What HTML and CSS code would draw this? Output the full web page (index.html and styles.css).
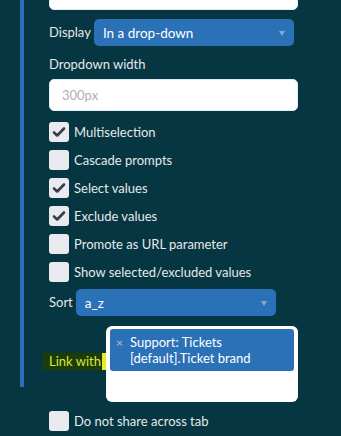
FILE: index.html
```html
<!DOCTYPE html>
<html lang="en">
<head>
  <meta charset="UTF-8" />
  <title>Prompt settings</title>
  <link rel="stylesheet" href="styles.css">
</head>
<body>
  <div class="panel">
    <!-- Cut off input above -->
    <div class="input input-top"></div>
    <!-- Display -->
    <div class="row display-row">
      <span class="label">Display</span>
      <div class="select select-display">
        <span>In a drop-down</span>
        <i class="caret"></i>
      </div>
    </div>
    <div class="field-label">Dropdown width</div>
    <div class="input"><span class="placeholder">300px</span></div>
    <!-- Options -->
    <div class="checks">
      <label class="check"><span class="box on"><svg viewBox="0 0 20 20"><path d="M5 10.5l3.2 3L15 6.5" /></svg></span>Multiselection</label>
      <label class="check"><span class="box"></span>Cascade prompts</label>
      <label class="check"><span class="box on"><svg viewBox="0 0 20 20"><path d="M5 10.5l3.2 3L15 6.5" /></svg></span>Select values</label>
      <label class="check"><span class="box on"><svg viewBox="0 0 20 20"><path d="M5 10.5l3.2 3L15 6.5" /></svg></span>Exclude values</label>
      <label class="check"><span class="box"></span>Promote as URL parameter</label>
      <label class="check"><span class="box"></span>Show selected/excluded values</label>
    </div>
    <!-- Sort -->
    <div class="row sort-row">
      <span class="label">Sort</span>
      <div class="select select-sort">
        <span>a_z</span>
        <i class="caret"></i>
      </div>
    </div>
    <!-- Link with -->
    <div class="row link-row">
      <span class="link-label">Link with</span>
      <div class="link-box">
        <div class="tag">
          <span class="tag-x">×</span>
          <span class="tag-text">Support: Tickets<br>[default].Ticket brand</span>
        </div>
      </div>
    </div>
  </div>
  <label class="check bottom-check"><span class="box"></span>Do not share across tab</label>
</body>
</html>
```

FILE: styles.css
```css
/* Reset */
* { margin: 0; padding: 0; box-sizing: border-box; }
html, body { height: 100%; }
body {
  background: #053641;
  color: #e6e9ea;
  font-family: Lato, "Open Sans", sans-serif;
  font-size: 13px;
  overflow: hidden;
}
/* Panel with blue rule */
.panel {
  margin-left: 20px;
  width: 278px;
  padding-left: 25px;
  border-left: 4px solid #2a6fb3;
}
.row {
  display: flex;
  align-items: center;
}
.label { margin-right: 3px; margin-top: -2px; }
/* Inputs */
.input {
  height: 32px;
  width: 249px;
  background: #fff;
  border: 1px solid #d9eef5;
  border-radius: 5px;
  margin-top: 6px;
  padding: 0 12px;
  display: flex;
  align-items: center;
}
.input-top { margin-top: -22px; }
.placeholder { color: #b0b0b0; font-size: 13px; }
.field-label { margin-top: 9px; line-height: 18px; }
/* Selects */
.select {
  height: 27px;
  background: #2a71b7;
  border-radius: 5px;
  color: #fff;
  font-size: 13.5px;
  display: flex;
  align-items: center;
  justify-content: space-between;
  padding: 0 9px 0 9px;
}
.select-display { width: 200px; }
.display-row { margin-top: 9px; }
.select-sort { width: 200px; }
.sort-row { margin-top: 3px; }
.caret {
  width: 0;
  height: 0;
  border-left: 3.5px solid transparent;
  border-right: 3.5px solid transparent;
  border-top: 5px solid #8ea7c2;
  margin-top: 1px;
}
/* Checkboxes */
.checks { margin-top: 7px; }
.check {
  display: flex;
  align-items: center;
  height: 28px;
}
.box {
  width: 20px;
  height: 20px;
  border-radius: 3px;
  background: #e8eaee;
  margin-right: 5px;
  display: flex;
}
.box svg { width: 20px; height: 20px; }
.box path {
  fill: none;
  stroke: #3a3d4b;
  stroke-width: 2.6;
  stroke-linecap: round;
  stroke-linejoin: round;
}
/* Link with */
.link-row {
  margin-top: 10px;
  align-items: flex-start;
}
.link-label {
  flex-shrink: 0;
  white-space: nowrap;
  margin-left: -6px;
  margin-top: 27px;
  width: 63px;
  height: 17px;
  line-height: 17px;
  padding-left: 6px;
  background: #1c3d08;
  color: #d9e83a;
  border-right: 4px solid #e4f01c;
}
.link-box {
  width: 197px;
  height: 76px;
  margin-bottom: -15px;
  background: #fff;
  border-radius: 6px;
  padding: 3px 4px;
}
.tag {
  background: #2a71b7;
  border-radius: 3px;
  height: 42px;
  display: flex;
  color: #fff;
  padding: 6px 6px 0;
}
.tag-x {
  color: #9fb0c4;
  font-size: 12px;
  font-weight: bold;
  width: 14px;
  line-height: 16px;
}
.tag-text { line-height: 16px; font-size: 13px; margin-top: -1px; }
/* Bottom checkbox */
.bottom-check {
  margin-left: 49px;
  margin-top: 20px;
}
```
